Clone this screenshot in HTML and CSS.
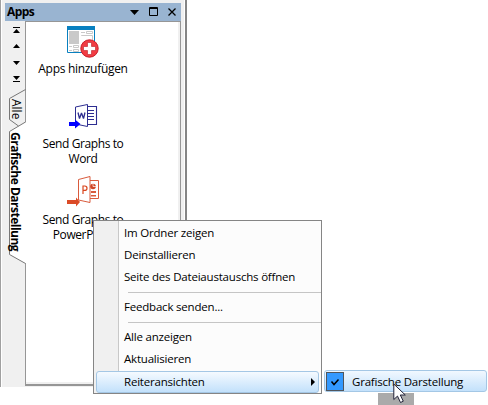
FILE: index.html
```
<!DOCTYPE html>
<html lang="de">
<head>
<meta charset="utf-8">
<title>Apps</title>
<link rel="stylesheet" href="styles.css">
</head>
<body>
<main class="desktop">
  <section class="panel">
    <header class="titlebar">
      <span class="title">Apps</span>
      <svg class="controls" width="50" height="18" viewBox="0 0 50 18"><path d="M1 7h9L5.500 12z"/><path d="M20.500 4.500h8v8h-8zM20 5.500h9" fill="none" stroke="#000"/><path d="M39.500 5.500l7 7M46.500 5.500l-7 7" fill="none" stroke="#000" stroke-width="1.300"/></svg>
    </header>
    <div class="body">
      <nav class="rail">
        <svg width="21" height="364" viewBox="0 0 21 364">
          <path d="M8 6h7v1H8zM11.500 8l3.500 4H8zM11.500 23l3.500 4H8zM8 40h7l-3.500 4zM8 55h7l-3.500 4zM8 60h7v1H8z"/>
          <path d="M21 101L4.500 110V233.500L21 242.500z" fill="#fff"/>
          <path d="M20.500 68.500L4.500 77.500V98.500L13.500 105M20.500 101L4.500 110.500V233.500L20.500 242.500" fill="none" stroke="#777"/>
        </svg>
        <span class="tab tab-all">Alle</span>
        <span class="tab tab-active">Grafische Darstellung</span>
      </nav>
      <div class="apps">
        <div class="app add">
          <svg width="34" height="34" viewBox="0 0 34 34">
            <path d="M1.500 1.500h27v26h-27z" fill="#fff" stroke="#0880c0"/><path d="M1 1h28v4H1z" fill="#0880c0"/>
            <path d="M3 6h10v13H3z" fill="#c9c9c9"/>
            <path d="M15.500 11V10.500h11V18M20.500 6.500h6v2h-6zM7.500 20.500h5v2h-5zM7.500 24.500h5v2h-5zM15 7.500h4M3 21.500h3M3 25.500h3" fill="none" stroke="#c9c9c9"/>
            <circle cx="23.500" cy="23.500" r="8.700" fill="#f23c43" stroke="#c81e28"/>
            <path d="M21.500 17.500h4v4h4v4h-4v4h-4v-4h-4v-4h4z" fill="#fff" stroke="#b91f29" stroke-width=".6"/>
          </svg>
          <span class="label">Apps hinzufügen</span>
        </div>
        <div class="app word">
          <svg width="34" height="30" viewBox="0 0 34 30">
            <path d="M7.500 5L19.500 2.500v22L7.500 22z" fill="#fff" stroke="#2d2d91"/>
            <path d="M20 4.500h8.500v18H20M20 8.500h6M20 11.500h6M20 14.500h6M20 17.500h6" fill="none" stroke="#2d2d91" stroke-width="1.100"/>
            <path d="M10 10.500l1.500 6 2-5.500 2 5.500 1.500-6" fill="none" stroke="#2d2d91" stroke-width="1.300" stroke-linejoin="bevel"/>
            <path d="M1 20h6v-2.500l5.500 4.500-5.500 4.500V24H1z" fill="#0000ff"/>
          </svg>
          <span class="label">Send Graphs to<br><i class="second">Word</i></span>
        </div>
        <div class="app powerpoint">
          <svg width="36" height="32" viewBox="0 0 36 32">
            <path d="M12.500 4.500L24 1.500v26L12.500 25z" fill="#fff" stroke="#d95b3d"/>
            <path d="M24 5.500h8.500v18H24" fill="none" stroke="#d95b3d"/>
            <path d="M17 19v-8h1.800q2.200 0 2.200 2.200t-2.200 2.200H17" fill="none" stroke="#d9461f" stroke-width="1.200"/>
            <circle cx="27" cy="11.500" r="2.800" fill="#d04525"/><path d="M27 11.500V8.500M27 11.500h3" stroke="#fff" stroke-width=".7"/>
            <path d="M25 16h5v2h-5zM25 20h5v1.500h-5z" fill="#d95b3d"/>
            <path d="M1 25h9v-2.500l4 4.500-4 4.500V29H1z" fill="#db4b27"/>
          </svg>
          <span class="label">Send Graphs to<br><i class="second">PowerPoint</i></span>
        </div>
      </div>
    </div>
  </section>

  <div class="menu">
    <div class="item"><span>Im Ordner zeigen</span></div>
    <div class="item"><span>Deinstallieren</span></div>
    <div class="item"><span>Seite des Dateiaustauschs öffnen</span></div>
    <div class="separator"></div>
    <div class="item"><span>Feedback senden...</span></div>
    <div class="separator"></div>
    <div class="item"><span>Alle anzeigen</span></div>
    <div class="item"><span>Aktualisieren</span></div>
    <div class="item selected"><span>Reiteransichten</span><svg class="arrow" width="4" height="8" viewBox="0 0 4 8"><path d="M0 0l4 4-4 4z"/></svg></div>
  </div>
  <div class="cursor-shadow"></div>
  <div class="submenu">
    <div class="check"><svg width="16" height="16" viewBox="0 0 16 16"><path d="M4.500 8.500l2.500 3 4.500-5" fill="none" stroke="#000" stroke-width="1.500"/></svg></div>
    <span>Grafische Darstellung</span>
  </div>
  <svg class="cursor" width="14" height="21" viewBox="0 0 14 21"><path d="M.8 1v15.500l3.700-3.400 3 6.400 2.800-1.300-3-6.200h5z" fill="#fff" stroke="#222238" stroke-width="1"/></svg>
</main>
</body>
</html>
```

FILE: styles.css
```
* { box-sizing: border-box; }
body { margin: 0; background: #fff; font-family: "Open Sans", "Noto Sans", sans-serif; color: #000; }
svg { display: block; }
.desktop { position: relative; width: 488px; height: 405px; overflow: hidden; }
.panel { width: 187px; height: 387px; padding: 3px 3px 1px 3px; background: #f0f0f0; border-left: 1px solid #a0a0a0; border-right: 2px solid #858585; box-shadow: inset 1px 0 #fff, inset -1px 0 #fff; }
.titlebar { display: flex; align-items: center; justify-content: space-between; width: 176px; height: 18px; margin-left: 1px; padding: 0 2px; background: #99b4d1; }
.title { font-size: 12px; font-weight: 700; line-height: 18px; letter-spacing: -0.6px; }
.body { display: flex; height: 365px; margin-left: 1px; }
.rail { position: relative; z-index: 1; width: 20px; }
.tab { position: absolute; writing-mode: vertical-rl; white-space: nowrap; line-height: 14px; font-size: 12px; }
.tab-all { left: 4px; top: 78px; }
.tab-active { left: 3px; top: 111px; font-weight: 700; letter-spacing: -0.5px; }
.apps { width: 156px; height: 365px; background: #fff; border: 1px solid #969696; border-width: 1px 1px 2px; box-shadow: inset -2px -2px #f0f0f0; }
.app { display: flex; flex-direction: column; align-items: center; width: 114px; text-align: center; }
.app svg { align-self: flex-start; }
.label { font-size: 12px; line-height: 15px; white-space: nowrap; letter-spacing: -0.4px; }
.second { font-style: normal; }
.add { padding-top: 3px; }
.add svg { margin-left: 40px; }
.add .label { margin-top: 2px; letter-spacing: -0.3px; }
.word { padding-top: 26px; }
.word svg { margin-left: 42px; }
.word .label { margin-top: 4px; }
.powerpoint { padding-top: 9px; }
.powerpoint svg { margin-left: 40px; }
.powerpoint .label { margin-top: 5px; }
.menu { position: absolute; left: 93px; top: 220px; width: 229px; height: 174px; padding: 2px; border: 1px solid #858585; background: linear-gradient(90deg, #f0f0f0 24px, #c8c8c8 24px 25px, #fcfcfc 25px); font-size: 11.5px; letter-spacing: -0.2px; }
.item { display: flex; align-items: center; height: 22px; padding: 0 0 2px 28px; line-height: 20px; white-space: nowrap; }
.separator { height: 8px; margin: 0 -2px 0 32px; padding-top: 3px; }
.separator::before { content: ""; display: block; height: 1px; background: #c5c5c5; }
.selected { justify-content: space-between; padding: 0 3px 1px 27px; border: 1px solid #a4c7e5; border-radius: 3px; background: linear-gradient(#f5faff, #c3e1fb); }
.cursor-shadow { position: absolute; left: 378px; top: 393px; width: 36px; height: 12px; background: #aaa; }
.submenu { position: absolute; left: 324px; top: 370px; width: 163px; height: 22px; display: flex; align-items: center; padding-left: 1px; gap: 8px; border: 1px solid #a4c7e5; border-radius: 3px; background: linear-gradient(#f1f8ff, #c3e1fb); font-size: 11.5px; letter-spacing: -0.2px; white-space: nowrap; }
.check { width: 18px; height: 19px; border: 1px solid #50565d; background: #3399ff; }
.cursor { position: absolute; left: 393px; top: 383px; }
```
